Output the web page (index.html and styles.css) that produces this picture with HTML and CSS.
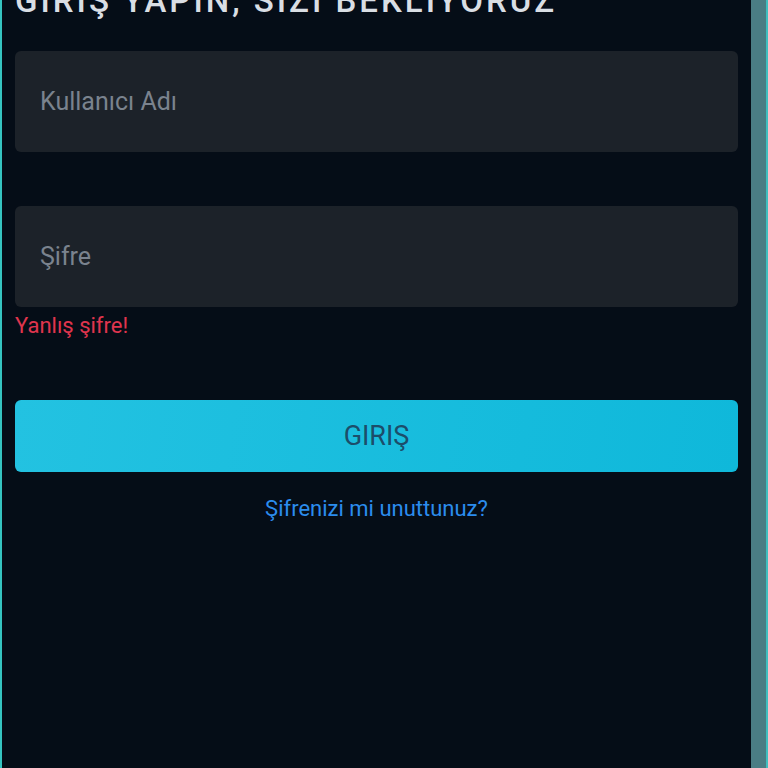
FILE: index.html
```html
<!DOCTYPE html>
<html lang="tr">
<head>
  <meta charset="UTF-8" />
  <title>Giriş</title>
  <link rel="stylesheet" href="styles.css">
</head>
<body>
  <div class="frame">
    <main class="panel">
      <h2 class="title">GIRIŞ YAPIN, SIZI BEKLIYORUZ</h2>
      <form class="login" onsubmit="return false">
        <input class="field" type="text" placeholder="Kullanıcı Adı">
        <div class="group">
          <input class="field" type="password" placeholder="Şifre">
          <div class="error">Yanlış şifre!</div>
        </div>
        <button class="submit" type="submit">GIRIŞ</button>
        <a class="forgot" href="#">Şifrenizi mi unuttunuz?</a>
      </form>
    </main>
    <div class="rail"></div>
  </div>
</body>
</html>
```

FILE: styles.css
```css
html, body {
  margin: 0;
  height: 100%;
}
body {
  font-family: Roboto, "Liberation Sans", sans-serif;
  background-color: #050d17;
  overflow: hidden;
}
.frame {
  display: flex;
  height: 768px;
  border-left: 2px solid #35c3c0;
  border-right: 2px solid #3fbfbf;
}
.panel {
  flex: 1;
  padding: 0 13px;
  background-color: #050d17;
}
.rail {
  width: 15px;
  background-color: #4a7d84;
}
.title {
  margin: -16px 0 0;
  font-size: 33px;
  font-weight: 500;
  letter-spacing: 3px;
  color: #d9dee4;
  line-height: 33px;
}
.login {
  display: flex;
  flex-direction: column;
  margin-top: 34px;
}
.field {
  height: 101px;
  box-sizing: border-box;
  padding: 0 25px;
  border: none;
  border-radius: 6px;
  background-color: #1c2229;
  font-family: inherit;
  font-size: 25px;
  color: #d9dee4;
  outline: none;
}
.field::placeholder {
  color: #7a838e;
}
.group {
  display: flex;
  flex-direction: column;
  margin-top: 54px;
}
.error {
  margin-top: 6px;
  font-size: 22px;
  line-height: 26px;
  color: #e0354e;
}
.submit {
  margin-top: 61px;
  height: 72px;
  border: none;
  border-radius: 6px;
  background: linear-gradient(100deg, #23c2e1, #0fb8da);
  font-family: inherit;
  font-size: 27px;
  color: #1c4d6a;
  cursor: pointer;
}
.forgot {
  align-self: center;
  margin-top: 24px;
  font-size: 22px;
  color: #2b8cee;
  text-decoration: none;
}
```
